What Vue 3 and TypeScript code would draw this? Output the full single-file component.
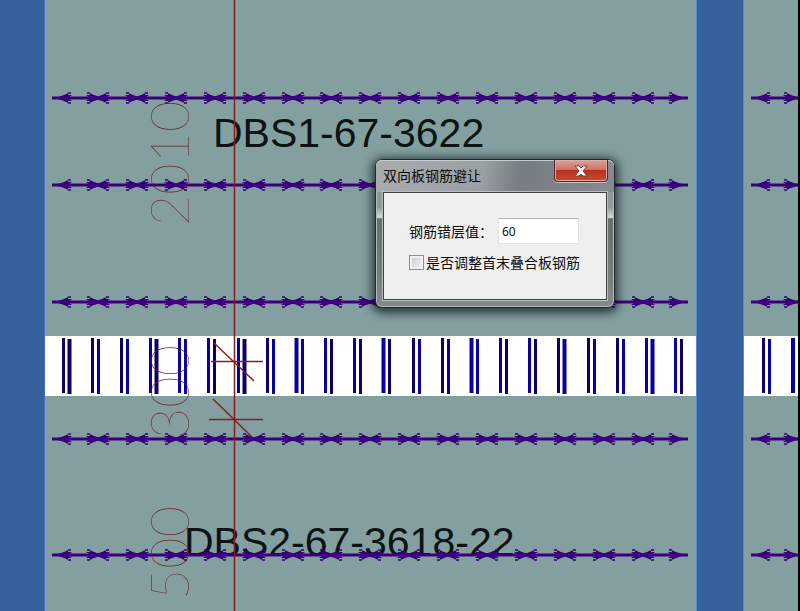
<script setup lang="ts">
import { ref } from 'vue'

interface Bar { x: number; y: number; w: number; color: string }

const offset = ref('60')
const adjustEnds = ref(false)
const open = ref(true)

const rowYs = [98, 185, 302, 439, 555]
const joints = Array.from({ length: 15 }, (_, i) => 98 + Math.round(i * 38.9))
const leftTips = [55, ...joints.map((x) => x - 5), 754]
const rightTips = [...joints.map((x) => x + 5), 685, 800]

// One code per bar of a pair: d = dark, b = blue, upper case = heavy bar.
const pairs = 'dD db db bD bb bd bD db Bb bd bd Bd db db Bb bd bd dB db db bB bd'.split(' ')
const makeBar = (code: string, x: number, y: number): Bar => ({
  x,
  y,
  w: code === code.toUpperCase() ? 4 : 3,
  color: code.toLowerCase() === 'd' ? '#0c0066' : '#0800a6',
})
const bars: Bar[] = pairs.flatMap((pair, i) => {
  const x = Math.floor(63 + i * 29.17) + 0.5
  return [makeBar(pair[0], x, 338), makeBar(pair[1], x + 6, 339)]
})
bars.push(makeBar('d', 763.5, 338), makeBar('b', 769.5, 339), makeBar('B', 793, 338))
</script>

<template>
  <main class="workspace">
    <svg class="drawing" viewBox="0 0 800 611" preserveAspectRatio="xMidYMid slice" role="img" aria-label="DBS1-67-3622 / DBS2-67-3618-22">
      <defs>
        <g id="head-left">
          <path d="M0 0L9 -3L17 -3L13 0L17 3L9 3Z" fill="#3c0083" />
          <path d="M9 -2L13 -4M9 2L13 4M13 -5H16M13 5H16" fill="none" stroke="#30006c" stroke-width="1.5" />
        </g>
        <g id="head-right">
          <path d="M0 0L-9 -3L-17 -3L-13 0L-17 3L-9 3Z" fill="#3c0083" />
          <path d="M-9 -2L-13 -4M-9 2L-13 4M-13 -5H-16M-13 5H-16" fill="none" stroke="#30006c" stroke-width="1.5" />
        </g>
      </defs>

      <rect width="800" height="611" fill="#849fa0" />
      <rect width="45" height="611" fill="#365f9e" />
      <rect x="44" width="1" height="611" fill="#4270c0" />
      <rect x="696" width="48" height="611" fill="#365f9e" />
      <path d="M696.5 0V611M743.5 0V611" stroke="#5788d0" />
      <rect x="45" y="336" width="651" height="60" fill="#fff" />
      <rect x="744" y="336" width="54" height="60" fill="#fff" />

      <g class="slab">
        <text x="213" y="147">DBS1-67-3622</text>
        <text x="184" y="556">DBS2-67-3618-22</text>
      </g>

      <line v-for="(b, i) in bars" :key="i" :x1="b.x" :x2="b.x" :y1="b.y" :y2="b.y + 55" :stroke-width="b.w" :stroke="b.color" />

      <g v-for="y in rowYs" :key="y">
        <path :d="`M52 ${y}H688M751 ${y}H798`" stroke="#3a007c" stroke-width="3" />
        <use v-for="x in leftTips" :key="'l' + x" href="#head-left" :x="x" :y="y" />
        <use v-for="x in rightTips" :key="'r' + x" href="#head-right" :x="x" :y="y" />
      </g>

      <g class="dimension">
        <text transform="translate(189 226) rotate(-90)">2010</text>
        <text transform="translate(189 439) rotate(-90)">300</text>
        <text transform="translate(189 600) rotate(-90)">500</text>
      </g>
      <g stroke="#80201f" stroke-width="1.5" fill="none">
        <path d="M234.5 0V611" />
        <path d="M211 361.5H263M214 343L254 381M209 419.5H263M213 399L252 437" />
      </g>
      <rect x="798" width="2" height="611" fill="#000" />
    </svg>

    <form v-if="open" class="dialog" role="dialog" aria-labelledby="dialog-title" @submit.prevent>
      <header class="titlebar">
        <h1 id="dialog-title">双向板钢筋避让</h1>
        <button class="close" type="button" aria-label="关闭" @click="open = false">
          <svg width="16" height="12" viewBox="0 0 16 12">
            <path d="M2 1H6L8 3L10 1H14L10 6L14 11H10L8 9L6 11H2L6 6Z" fill="#fff" stroke="#8a3a34" stroke-width="1" />
          </svg>
        </button>
      </header>
      <div class="content">
        <div class="field">
          <label for="offset">钢筋错层值：</label>
          <input id="offset" v-model="offset" type="text" />
        </div>
        <div class="check">
          <input id="adjust" v-model="adjustEnds" type="checkbox" />
          <label for="adjust">是否调整首末叠合板钢筋</label>
        </div>
      </div>
    </form>
  </main>
</template>

<style>
body { overflow: hidden; }
</style>

<style scoped>
.workspace {
  position: relative;
  height: 100vh;
  overflow: hidden;
  background: #849fa0;
}
.drawing {
  display: block;
  width: 100%;
  height: 100%;
}
.slab {
  font-family: "Liberation Sans", Arial, sans-serif;
  font-size: 41px;
  fill: #0b1414;
}
.dimension {
  font-family: Lato, Roboto, sans-serif;
  font-size: 54px;
  font-weight: 100;
  fill: #6b1a20;
}
.dialog {
  position: absolute;
  left: 375px;
  top: 159px;
  box-sizing: border-box;
  width: 240px;
  padding: 0 7px 7px;
  border: 1px solid #23282a;
  border-radius: 7px;
  background: linear-gradient(#8d9699 0, #92999c 32%, #d5dadb 39%, #65706f 40%, #747c7e 75%, #858b8d 100%);
  box-shadow: inset 0 0 0 1px #b4babc, 0 2px 10px 3px rgba(10, 22, 24, 0.75);
  font-family: "Noto Sans CJK SC", sans-serif;
  font-size: 14px;
  line-height: 20px;
  color: #0c0c0c;
}
.titlebar {
  display: flex;
  align-items: flex-start;
  justify-content: space-between;
  height: 32px;
  margin: 0 -7px;
  padding: 0 6px 0 7px;
  border-radius: 6px 6px 0 0;
  background: linear-gradient(100deg, #a9adb0 0, #9a9fa3 45%, #787c84 60%, #858b90 100%);
  box-shadow: inset 0 1px 0 #c8cccd;
}
h1 {
  margin: 5px 0 0;
  font-size: 14px;
  font-weight: 400;
  line-height: 20px;
}
.close {
  display: flex;
  align-items: center;
  justify-content: center;
  width: 54px;
  height: 22px;
  padding: 0;
  border: 1px solid #54262a;
  border-top: 0;
  border-radius: 0 0 4px 4px;
  background: linear-gradient(#dba49b 0, #cd7468 45%, #b9301e 50%, #c84a30 100%);
  box-shadow: inset 0 0 0 1px #e3aaa2, 0 1px 0 #c4c6c9;
}
.content {
  display: flex;
  flex-direction: column;
  gap: 8px;
  box-sizing: border-box;
  min-height: 108px;
  padding: 25px 27px 0 25px;
  border: 1px solid #3c4244;
  background: #efeff0;
  box-shadow: 0 0 0 1px #b8bfc0;
}
.field {
  display: flex;
  align-items: center;
  justify-content: space-between;
}
.field label {
  white-space: nowrap;
}
.field input {
  box-sizing: border-box;
  width: 81px;
  height: 26px;
  padding: 0 3px;
  border: 1px solid #e2e3e6;
  border-top-color: #b4b6ba;
  background: #fff;
  font: 12px "Noto Sans", "Noto Sans CJK SC", sans-serif;
  color: #111;
}
.check {
  display: flex;
  align-items: center;
  gap: 2px;
  white-space: nowrap;
}
.check input {
  flex: none;
  appearance: none;
  width: 15px;
  height: 15px;
  margin: 0;
  border: 1px solid #8e8f8f;
  background: linear-gradient(135deg, #c4c8cd, #f8f8f8);
  box-shadow: inset 0 0 0 2px #f1f1f1;
}
.check input:checked {
  background: #31537e;
}
</style>
